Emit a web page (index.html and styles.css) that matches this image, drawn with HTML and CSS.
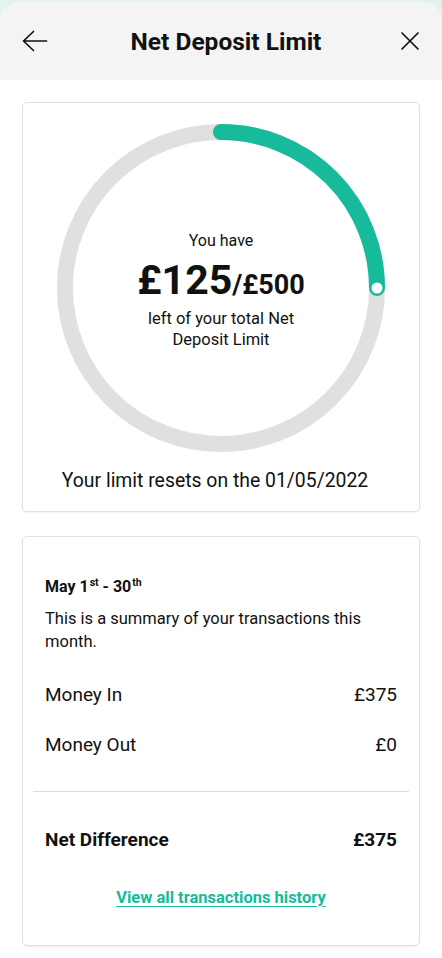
FILE: index.html
```html
<!DOCTYPE html>
<html lang="en">
<head>
<meta charset="utf-8">
<title>Net Deposit Limit</title>
<link rel="stylesheet" href="styles.css">
</head>
<body>
<div class="modal">
  <header class="header">
    <button class="icon-btn" aria-label="Back">
      <svg width="26" height="26" viewBox="0 0 26 26"><path d="M24.5 13H1.5M11.5 3.5L1.5 13l10 9.5" fill="none" stroke="#111" stroke-width="1.7" stroke-linecap="round" stroke-linejoin="round"/></svg>
    </button>
    <h1 class="title">Net Deposit Limit</h1>
    <button class="icon-btn" aria-label="Close">
      <svg width="20" height="20" viewBox="0 0 20 20"><path d="M2 2L18 18M18 2L2 18" fill="none" stroke="#111" stroke-width="1.7" stroke-linecap="round"/></svg>
    </button>
  </header>
  <main class="content">
    <section class="card gauge-card">
      <div class="gauge">
        <svg class="ring" width="330" height="330" viewBox="0 0 330 330">
          <circle cx="165" cy="165" r="156" fill="none" stroke="#e0e0e0" stroke-width="16"/>
          <path d="M165 9A156 156 0 0 1 321 165" fill="none" stroke="#17bb9b" stroke-width="16" stroke-linecap="round"/>
          <circle cx="321" cy="165" r="5.5" fill="#fff"/>
        </svg>
        <div class="gauge-text">
          <div class="you-have">You have</div>
          <div class="amount"><span class="big">£125</span><span class="total">/£500</span></div>
          <div class="left-of">left of your total Net<br>Deposit Limit</div>
        </div>
      </div>
      <p class="reset">Your limit resets on the 01/05/2022</p>
    </section>
    <section class="card summary-card">
      <div class="summary-top">
        <h2 class="period">May 1<sup>st</sup> - 30<sup>th</sup></h2>
        <p class="desc">This is a summary of your transactions this month.</p>
        <div class="row"><span>Money In</span><span>£375</span></div>
        <div class="row"><span>Money Out</span><span>£0</span></div>
      </div>
      <hr class="divider">
      <div class="row net"><span>Net Difference</span><span>£375</span></div>
      <a class="link" href="#">View all transactions history</a>
    </section>
  </main>
</div>
</body>
</html>
```
FILE: styles.css
```css
* { box-sizing: border-box; }
html, body { margin: 0; padding: 0; }
body {
  background: #e3f2ee;
  font-family: Roboto, "Liberation Sans", Arial, sans-serif;
  color: #111;
  width: 442px;
  height: 958px;
  overflow: hidden;
}
.modal {
  margin-top: 2px;
  background: #fff;
  border-radius: 20px 20px 0 0;
  overflow: hidden;
  height: 956px;
}
.header {
  height: 78px;
  background: #f4f4f4;
  display: flex;
  align-items: center;
  justify-content: space-between;
  padding: 0 18px 0 21px;
}
.icon-btn {
  background: none;
  border: 0;
  padding: 0;
  display: flex;
  align-items: center;
  justify-content: center;
  width: 28px;
  height: 28px;
}
.title {
  margin: 0 0 0 7px;
  font-size: 24.5px;
  font-weight: 700;
  color: #111;
}
.content {
  padding: 22px 22px 0;
  display: flex;
  flex-direction: column;
  gap: 24px;
}
.card {
  border: 1px solid #e0e0e0;
  border-radius: 5px;
  background: #fff;
  box-shadow: 0 1px 2px rgba(0,0,0,0.06);
}
.gauge-card {
  padding: 20px 0 18px;
  display: flex;
  flex-direction: column;
  align-items: center;
}
.gauge {
  display: grid;
  width: 330px;
  height: 330px;
}
.ring, .gauge-text { grid-area: 1 / 1; }
.gauge-text {
  display: flex;
  flex-direction: column;
  align-items: center;
  justify-content: center;
  text-align: center;
  padding-top: 4px;
}
.you-have { font-size: 16px; line-height: 21px; }
.amount { font-weight: 700; line-height: 50px; margin-top: 4px; }
.big { font-size: 41px; }
.total { font-size: 27px; }
.left-of { font-size: 16.5px; line-height: 21px; margin-top: -6px; }
.reset {
  margin: 16px 12px 0 0;
  font-size: 19.4px;
  line-height: 24px;
}
.summary-card {
  padding: 40px 10px 36px;
}
.summary-top { padding: 0 12px 0 12px; }
.period {
  margin: 0;
  font-size: 16px;
  font-weight: 700;
  line-height: 20px;
}
.period sup { font-size: 10.5px; vertical-align: 6px; line-height: 0; margin-left: 1px; }
.desc {
  margin: 10px 0 0;
  font-size: 16.5px;
  line-height: 23px;
}
.row {
  display: flex;
  justify-content: space-between;
  font-size: 19px;
  line-height: 24px;
}
.summary-top .row { margin-top: 30px; }
.summary-top .row + .row { margin-top: 26px; }
.divider {
  border: 0;
  border-top: 1px solid #dcdcdc;
  margin: 34px 0 0;
}
.net {
  padding: 0 12px;
  margin-top: 36px;
  font-weight: 700;
}
.link {
  display: block;
  text-align: center;
  margin-top: 35px;
  font-size: 16.5px;
  font-weight: 700;
  color: #17bb9b;
  text-decoration: underline;
  text-underline-offset: 3px;
  line-height: 22px;
}
```
